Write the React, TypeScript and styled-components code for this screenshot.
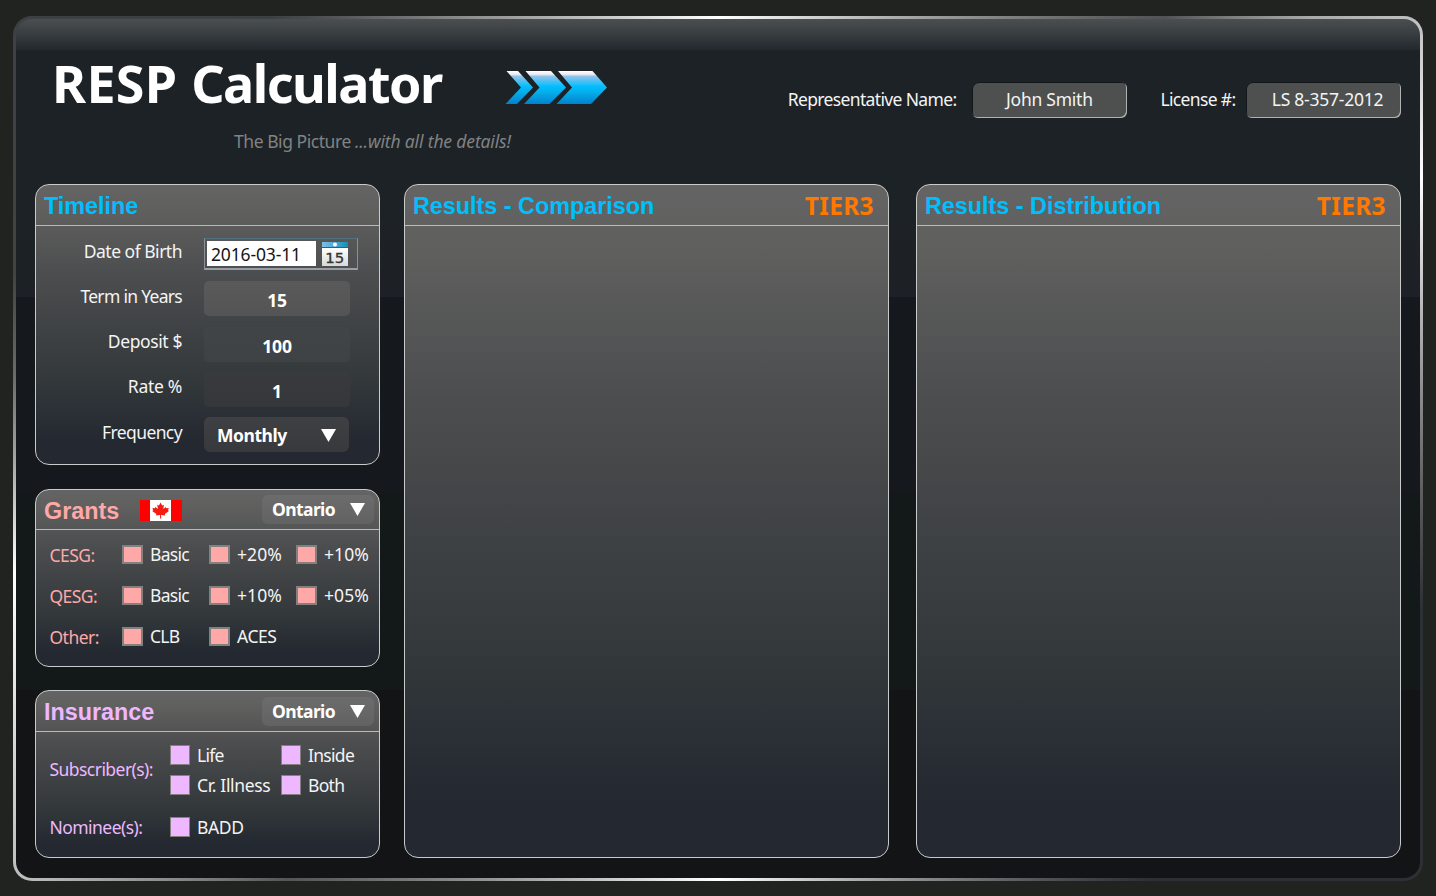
import React from 'react';
import styled, { createGlobalStyle } from 'styled-components';

const GlobalStyle = createGlobalStyle`
  *, *::before, *::after { box-sizing: border-box; }
  body {
    margin: 0;
    background: #212320;
    color: #f4f4f4;
    font-family: "Noto Sans", "Open Sans", sans-serif;
    font-size: 17.5px;
    line-height: 24px;
  }
`;

const Page = styled.main`
  width: 1436px;
  height: 896px;
  padding: 16px 13px 15px;
  overflow: hidden;
`;

const Frame = styled.div`
  height: 865px;
  border: 3px solid transparent;
  border-radius: 19px;
  display: flex;
  flex-direction: column;
  background:
    linear-gradient(#4b4f51 0, #393e41 14px, #23282d 31px, #1d2226 31px, #1d2226 200px, #1d2127 278px,
      #15181d 278px, #15181c 470px, #131819 480px, #131819 671px, #131416 671px) padding-box,
    conic-gradient(#fff 0deg, #b5b5b5 20deg, #505253 46deg, #a9a9a9 54deg, #c8c8c8 60deg, #fff 69deg,
      #b5b5b8 79deg, #666 92deg, #2c2f33 103deg, #2c2f33 135deg, #fff 180deg, #555 225deg, #bbb 238deg,
      #fff 260deg, #a5a5a5 269deg, #6a6a6a 276deg, #414244 284deg, #3b4043 314deg, #8a8a8a 329deg, #fff 360deg) border-box;
`;

const Header = styled.header`
  height: 165px;
  flex: none;
  display: flex;
  align-items: flex-start;
  padding: 29px 19px 0 36px;
`;

const Brand = styled.div`
  width: 453px;
`;

const Title = styled.h1`
  margin: 0;
  height: 70px;
  font-size: 52px;
  line-height: 70px;
  font-weight: 700;
  letter-spacing: -1.5px;
  color: #fff;
  white-space: nowrap;
`;

const Acronym = styled.span`
  letter-spacing: 0.3px;
`;

const Tagline = styled.p`
  margin: 11px 0 0 182px;
  line-height: 24px;
  color: #808284;
  letter-spacing: -0.45px;
  white-space: nowrap;
  em { letter-spacing: -0.15px; }
`;

const Arrows = styled.svg`
  width: 102px;
  height: 34px;
  margin-top: 23px;
  flex: none;
`;

const Agent = styled.div`
  margin-left: auto;
  margin-top: 34px;
  display: flex;
  align-items: center;
  height: 36px;
`;

const AgentLabel = styled.span<{ $gap: number }>`
  margin-right: ${p => p.$gap}px;
  padding-bottom: 2px;
  letter-spacing: -0.65px;
  white-space: nowrap;
`;

const AgentField = styled.div<{ $indent?: number }>`
  width: 155px;
  height: 36px;
  border-radius: 6px;
  background: #4d504f;
  box-shadow: inset 1px 1px 0 #14171a, inset -1px -1px 0 #b0b2b2;
  line-height: 35px;
  text-align: center;
  padding-left: ${p => p.$indent ?? 0}px;
  letter-spacing: -0.25px;
  & + span { margin-left: 33.5px; }
`;

const Columns = styled.div`
  display: grid;
  grid-template-columns: 345px 485px 485px;
  column-gap: 24px;
  padding-left: 19px;
  height: 674px;
  & > :last-child { margin-left: 3px; margin-right: -3px; }
`;

const Sidebar = styled.div`
  display: flex;
  flex-direction: column;
  justify-content: space-between;
`;

const Panel = styled.section<{ $height: number }>`
  height: ${p => p.$height}px;
  border: 1px solid #c9caca;
  border-radius: 14px;
  background: linear-gradient(#646464 0%, #5f5f5e 10%, #4c4d4f 32%, #3f4244 52%, #33383a 70%, #2a3036 82%, #242830 92%, #242830 100%);
`;

const PanelHead = styled.div<{ $height?: number }>`
  height: ${p => p.$height ?? 41}px;
  border-bottom: 1px solid #b9baba;
  display: flex;
  align-items: center;
  padding: 0 5px 0 8px;
`;

const PanelTitle = styled.h2<{ $color: string; $drop?: number }>`
  margin: 0;
  padding-top: ${p => p.$drop ?? 2}px;
  font: 700 23.35px/30px "Liberation Sans", Arial, sans-serif;
  color: ${p => p.$color};
  white-space: nowrap;
`;

const Tier = styled.strong`
  margin-left: auto;
  margin-right: 9px;
  padding-top: 1px;
  font-size: 24.5px;
  color: #ff7800;
  letter-spacing: 0.35px;
`;

const Flag = styled.svg`
  width: 42px;
  height: 21px;
  margin: 2px 0 0 21px;
`;

const Select = styled.div<{ $large?: boolean }>`
  width: ${p => (p.$large ? 145 : 112)}px;
  height: ${p => (p.$large ? 35 : 29)}px;
  margin-left: ${p => (p.$large ? 0 : 'auto')};
  display: flex;
  align-items: center;
  justify-content: space-between;
  padding: ${p => (p.$large ? '1px 13px 0' : '0 9px 0 10px')};
  border-radius: 6px;
  background: ${p => (p.$large ? 'linear-gradient(#3f4043, #38393d)' : 'linear-gradient(#6c6c6c, #626262)')};
  color: #fff;
  font-weight: 700;
  letter-spacing: ${p => (p.$large ? -0.45 : -0.6)}px;
`;

const Caret = styled.svg`
  width: 15px;
  height: 13px;
  fill: #fff;
`;

const FormBody = styled.div`
  padding-top: 5px;
`;

const FormRow = styled.div`
  height: 45.25px;
  display: flex;
  align-items: center;
`;

const FormLabel = styled.label<{ $spacing?: number }>`
  width: 146px;
  margin-right: 22px;
  padding-bottom: 6px;
  text-align: right;
  letter-spacing: ${p => p.$spacing ?? -0.3}px;
`;

const NumberField = styled.div<{ $top: string; $bottom: string }>`
  width: 146px;
  height: 35px;
  border-radius: 5px;
  background: linear-gradient(${p => p.$top}, ${p => p.$bottom});
  color: #fff;
  font-weight: 700;
  line-height: 38px;
  text-align: center;
  letter-spacing: -0.2px;
`;

const DateField = styled.div`
  width: 154px;
  height: 32px;
  display: flex;
  align-items: center;
  border: 1px solid;
  border-width: 1px 1px 2px 1px;
  border-color: #50727f #8b8f98 #999da6 #8b8f98;
  padding-left: 2px;
`;

const DateValue = styled.span`
  width: 109px;
  height: 25px;
  margin-top: 1px;
  padding-left: 4px;
  background: #fff;
  color: #151515;
  line-height: 26px;
  letter-spacing: -0.15px;
`;

const Calendar = styled.svg`
  width: 28px;
  height: 25px;
  margin-left: 5px;
`;

const OptionRow = styled.div<{ $label: number; $col: number; $color: string }>`
  display: grid;
  grid-template-columns: ${p => p.$label}px ${p => p.$col}px ${p => p.$col}px 80px;
  height: 41px;
  align-items: center;
  color: ${p => p.$color};
  letter-spacing: -0.6px;
  white-space: nowrap;
`;

const GrantsBody = styled.div`
  padding: 4px 0 0 14px;
`;

const InsuranceBody = styled.div`
  padding: 8px 0 0 14px;
`;

const OptionStack = styled.div`
  display: grid;
  grid-template-columns: 111px 100px;
  grid-auto-rows: 30px;
  align-items: center;
`;

const SubscriberRow = styled.div`
  display: grid;
  grid-template-columns: 120px 211px;
  height: 60px;
  margin-bottom: 6px;
  align-items: center;
`;

const GroupLabel = styled.span<{ $color: string; $drop?: number; $lift?: number }>`
  color: ${p => p.$color};
  letter-spacing: -0.55px;
  margin-left: -0.5px;
  padding-top: ${p => p.$drop ?? 0}px;
  padding-bottom: ${p => p.$lift ?? 0}px;
`;

const Check = styled.label<{ $color: string; $tall?: boolean; $spacing?: number }>`
  display: flex;
  align-items: center;
  gap: 7px;
  color: #f4f4f4;
  letter-spacing: ${p => p.$spacing ?? -0.7}px;
  white-space: nowrap;
  &::before {
    content: '';
    width: ${p => (p.$tall ? 20 : 21)}px;
    height: ${p => (p.$tall ? 20 : 19)}px;
    flex: none;
    border: ${p => (p.$tall ? 1.5 : 2)}px solid #858080;
    background: ${p => p.$color};
  }
`;

const BLUE = '#00bfff';
const PINK = '#ffa8a8';
const VIOLET = '#edb8ff';

function Triangle() {
  return (
    <Caret viewBox="0 0 15 13">
      <path d="M0 0H15L7.5 13Z" />
    </Caret>
  );
}

function CanadaFlag() {
  return (
    <Flag viewBox="0 0 42 21">
      <rect width="42" height="21" fill="#fe0000" />
      <rect x="10" width="21" height="21" fill="#fff" />
      <path
        fill="#f21c12"
        d="M20.5 2.5l1.7 3 1.7-.8-.6 4.3 2.5-2 .5 1.3 2.5-.4-.8 2.3 1 .7-4.200 3.1.4 1.5-4.1-.5.1 3.5h-1.2l.1-3.5-4.1.5.4-1.5-4.2-3.1 1-.7-.8-2.3 2.5.4.5-1.3 2.5 2-.6-4.3 1.7.8z"
      />
    </Flag>
  );
}

function CalendarIcon() {
  return (
    <Calendar viewBox="0 0 28 25">
      <defs>
        <linearGradient id="calTop" x1="0" x2="1">
          <stop offset="0" stopColor="#7cc0e4" />
          <stop offset=".5" stopColor="#4ba9d6" />
          <stop offset="1" stopColor="#188bb8" />
        </linearGradient>
        <linearGradient id="calPage" x1="0" x2="0" y1="0" y2="1">
          <stop offset="0" stopColor="#fff" />
          <stop offset="1" stopColor="#d7d8da" />
        </linearGradient>
      </defs>
      <rect x="1" y="1" width="26" height="5" fill="url(#calTop)" />
      <circle cx="14" cy="3.5" r="2" fill="#fff" />
      <rect x="1" y="7" width="26" height="18" fill="url(#calPage)" />
      <text x="13.8" y="21.5" textAnchor="middle" fontFamily="DejaVu Sans" fontSize="13.5" fill="#333" stroke="#333" strokeWidth=".3" textLength="19" lengthAdjust="spacingAndGlyphs">
        15
      </text>
    </Calendar>
  );
}

export default function App() {
  return (
    <>
      <GlobalStyle />
      <Page>
        <Frame>
          <Header>
            <Brand>
              <Title>
                <Acronym>RESP </Acronym>Calculator
              </Title>
              <Tagline>
                The Big Picture <em>...with all the details!</em>
              </Tagline>
            </Brand>
            <Arrows viewBox="0 0 102 34">
              <defs>
                <linearGradient id="arrowFill" gradientUnits="userSpaceOnUse" x1="0" y1="0" x2="0" y2="34">
                  <stop offset="0" stopColor="#fff" />
                  <stop offset=".1" stopColor="#e9e9f3" />
                  <stop offset=".16" stopColor="#8fc3ea" />
                  <stop offset=".46" stopColor="#00bdff" />
                  <stop offset=".62" stopColor="#05aeeb" />
                  <stop offset="1" stopColor="#007ecb" />
                </linearGradient>
              </defs>
              <g fill="url(#arrowFill)">
                <path d="M1.5 0H13L28 16.500L12 33H.5L16 16.500Z" />
                <path d="M20.500 0H46L61 16.500L44.500 33H19L34.500 16.500Z" />
                <path d="M53 0H87.500L102 16.500L86 33H51.500L67 16.500Z" />
              </g>
            </Arrows>
            <Agent>
              <AgentLabel $gap={15.5}>Representative Name:</AgentLabel>
              <AgentField>John Smith</AgentField>
              <AgentLabel $gap={10.5}>License #:</AgentLabel>
              <AgentField $indent={8}>LS 8-357-2012</AgentField>
            </Agent>
          </Header>
          <Columns>
            <Sidebar>
              <Panel $height={281}>
                <PanelHead>
                  <PanelTitle $color={BLUE}>Timeline</PanelTitle>
                </PanelHead>
                <FormBody>
                  <FormRow>
                    <FormLabel $spacing={-0.5}>Date of Birth</FormLabel>
                    <DateField>
                      <DateValue>2016-03-11</DateValue>
                      <CalendarIcon />
                    </DateField>
                  </FormRow>
                  <FormRow>
                    <FormLabel $spacing={-0.7}>Term in Years</FormLabel>
                    <NumberField $top="#5a5a5b" $bottom="#545455">15</NumberField>
                  </FormRow>
                  <FormRow>
                    <FormLabel $spacing={-0.4}>Deposit $</FormLabel>
                    <NumberField $top="#424547" $bottom="#3f4244">100</NumberField>
                  </FormRow>
                  <FormRow>
                    <FormLabel>Rate %</FormLabel>
                    <NumberField $top="#383a3e" $bottom="#35383b">1</NumberField>
                  </FormRow>
                  <FormRow>
                    <FormLabel $spacing={-0.6}>Frequency</FormLabel>
                    <Select $large>
                      Monthly
                      <Triangle />
                    </Select>
                  </FormRow>
                </FormBody>
              </Panel>
              <Panel $height={178}>
                <PanelHead $height={40}>
                  <PanelTitle $color={PINK} $drop={4}>Grants</PanelTitle>
                  <CanadaFlag />
                  <Select>
                    Ontario
                    <Triangle />
                  </Select>
                </PanelHead>
                <GrantsBody>
                  <OptionRow $label={72} $col={87} $color={PINK}>
                    <GroupLabel $color={PINK} $drop={2}>CESG:</GroupLabel>
                    <Check $color={PINK}>Basic</Check>
                    <Check $color={PINK} $spacing={0.1}>+20%</Check>
                    <Check $color={PINK} $spacing={0.1}>+10%</Check>
                  </OptionRow>
                  <OptionRow $label={72} $col={87} $color={PINK}>
                    <GroupLabel $color={PINK} $drop={2}>QESG:</GroupLabel>
                    <Check $color={PINK}>Basic</Check>
                    <Check $color={PINK} $spacing={0.1}>+10%</Check>
                    <Check $color={PINK} $spacing={0.1}>+05%</Check>
                  </OptionRow>
                  <OptionRow $label={72} $col={87} $color={PINK}>
                    <GroupLabel $color={PINK} $drop={2}>Other:</GroupLabel>
                    <Check $color={PINK}>CLB</Check>
                    <Check $color={PINK} $spacing={-0.45}>ACES</Check>
                  </OptionRow>
                </GrantsBody>
              </Panel>
              <Panel $height={168}>
                <PanelHead>
                  <PanelTitle $color={VIOLET}>Insurance</PanelTitle>
                  <Select>
                    Ontario
                    <Triangle />
                  </Select>
                </PanelHead>
                <InsuranceBody>
                  <SubscriberRow>
                    <GroupLabel $color={VIOLET} $lift={2}>Subscriber(s):</GroupLabel>
                    <OptionStack>
                      <Check $tall $color={VIOLET}>Life</Check>
                      <Check $tall $color={VIOLET}>Inside</Check>
                      <Check $tall $color={VIOLET} $spacing={-0.35}>Cr. Illness</Check>
                      <Check $tall $color={VIOLET}>Both</Check>
                    </OptionStack>
                  </SubscriberRow>
                  <OptionRow $label={120} $col={87} $color={VIOLET}>
                    <GroupLabel $color={VIOLET}>Nominee(s):</GroupLabel>
                    <Check $tall $color={VIOLET} $spacing={-0.4}>BADD</Check>
                  </OptionRow>
                </InsuranceBody>
              </Panel>
            </Sidebar>
            <Panel $height={674}>
              <PanelHead>
                <PanelTitle $color={BLUE}>Results - Comparison</PanelTitle>
                <Tier>TIER3</Tier>
              </PanelHead>
            </Panel>
            <Panel $height={674}>
              <PanelHead>
                <PanelTitle $color={BLUE}>Results - Distribution</PanelTitle>
                <Tier>TIER3</Tier>
              </PanelHead>
            </Panel>
          </Columns>
        </Frame>
      </Page>
    </>
  );
}
